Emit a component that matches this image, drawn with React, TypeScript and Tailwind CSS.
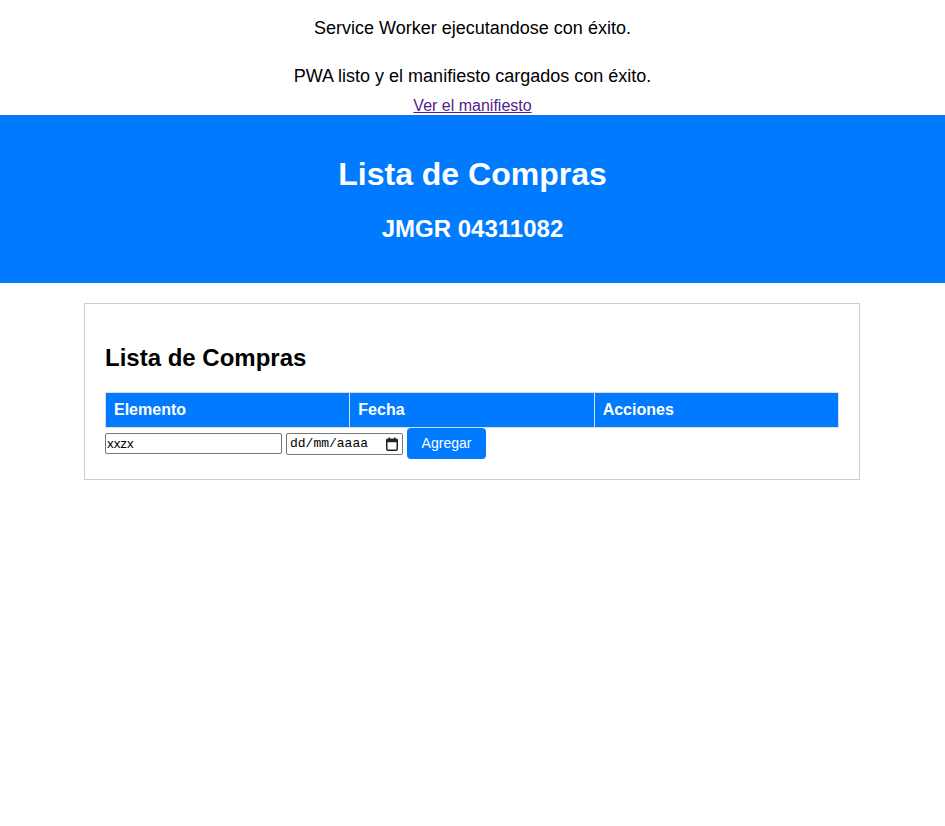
import React from "react";

export default function App() {
  return (
    <div className="min-h-[826px] bg-white text-black" style={{ fontFamily: '"Liberation Sans", Arial, sans-serif' }}>
      <div className="pt-[18px] text-center">
        <p className="text-[18px] leading-[21px]">Service Worker ejecutandose con éxito.</p>
        <p className="mt-[27px] text-[18px] leading-[21px]">PWA listo y el manifiesto cargados con éxito.</p>
        <div className="mt-[9px] h-[19px] text-[16px] leading-[19px]">
          <a href="#" className="text-[#551a8b] underline">Ver el manifiesto</a>
        </div>
      </div>
      <header className="bg-[#007bff] px-5 pt-[41px] pb-[40px] text-center text-white">
        <h1 className="text-[32px] font-bold leading-[37px]">Lista de Compras</h1>
        <h2 className="mt-[22px] text-[24px] font-bold leading-[28px]">JMGR 04311082</h2>
      </header>
      <div className="flex justify-center pr-[1px]">
        <div className="mt-5 w-[776px] border border-[#cccccc] px-5 pt-10 pb-5">
          <h2 className="text-[24px] font-bold leading-[28px]">Lista de Compras</h2>
          <table className="mt-5 w-full border-collapse">
            <thead>
              <tr>
                <th className="w-1/3 border border-[#dddddd] bg-[#007bff] px-2 py-2 text-left text-[16px] font-bold leading-[18px] text-white">Elemento</th>
                <th className="w-1/3 border border-[#dddddd] bg-[#007bff] px-2 py-2 text-left text-[16px] font-bold leading-[18px] text-white">Fecha</th>
                <th className="w-1/3 border border-[#dddddd] bg-[#007bff] px-2 py-2 text-left text-[16px] font-bold leading-[18px] text-white">Acciones</th>
              </tr>
            </thead>
          </table>
          <div className="flex items-center gap-[4px]">
            <input
              type="text"
              readOnly
              value="xxzx"
              className="h-[21px] w-[177px] rounded-[2px] border border-[#767676] px-[1px] text-[13.33px] leading-[15px] outline-none"
              style={{ fontFamily: '"Liberation Sans", Arial, sans-serif' }}
            />
            <div className="flex h-[22px] w-[117px] items-center justify-between rounded-[2px] border border-[#767676] pl-[3px] pr-[4px] text-[13px] text-black" style={{ fontFamily: '"Liberation Mono", "DejaVu Sans Mono", monospace' }}>
              <span>dd/mm/aaaa</span>
              <svg width="12" height="14" viewBox="0 0 12 14">
                <rect x="0.75" y="2.25" width="10.5" height="11" rx="1" fill="none" stroke="#222" strokeWidth="1.5" />
                <rect x="0.75" y="2.25" width="10.5" height="3" fill="#222" />
                <rect x="2.5" y="0.5" width="1.5" height="3" fill="#222" />
                <rect x="8" y="0.5" width="1.5" height="3" fill="#222" />
              </svg>
            </div>
            <button className="h-[31px] w-[79px] rounded-[4px] bg-[#007bff] text-[14px] text-white">Agregar</button>
          </div>
        </div>
      </div>
    </div>
  );
}
